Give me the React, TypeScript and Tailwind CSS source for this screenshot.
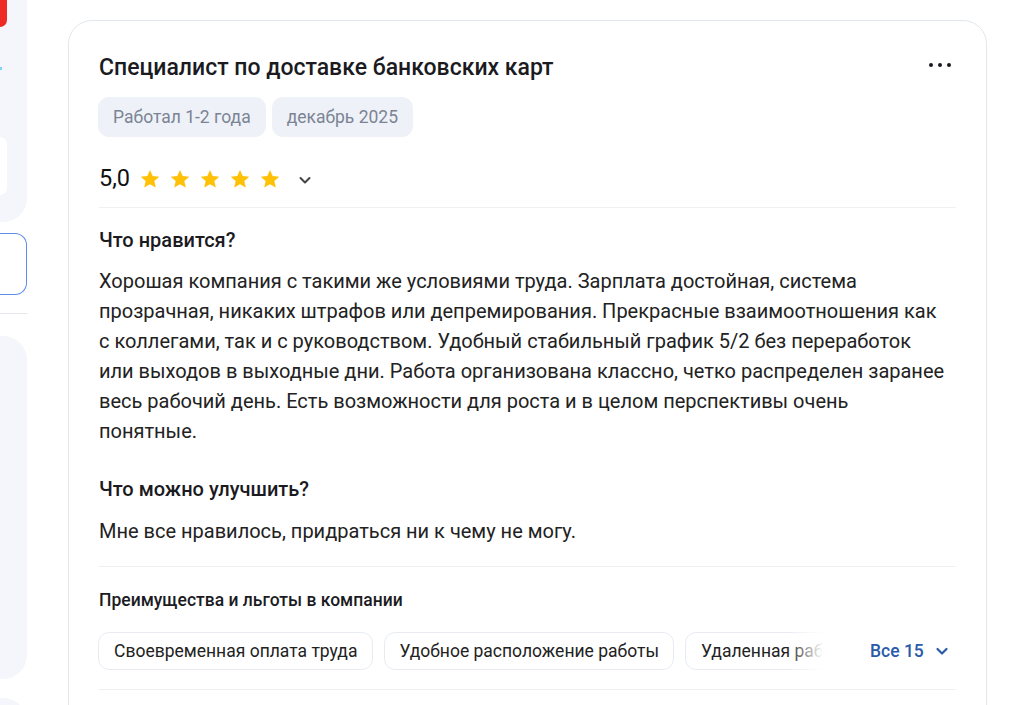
import React from "react";

function Star() {
  return (
    <svg width="22" height="22" viewBox="0 0 24 24" className="shrink-0">
      <path
        d="M12 2.2l2.95 6.6 7.2.7-5.43 4.8 1.6 7.07L12 17.7l-6.32 3.67 1.6-7.07L1.85 9.5l7.2-.7z"
        fill="#ffc107"
      />
    </svg>
  );
}

function Chevron({ color, size = 16, sw = 2 }: { color: string; size?: number; sw?: number }) {
  return (
    <svg width={size} height={size} viewBox="0 0 16 16" fill="none">
      <path d="M3.5 6l4.5 4.5L12.5 6" stroke={color} strokeWidth={sw} strokeLinecap="round" strokeLinejoin="round" />
    </svg>
  );
}

export default function App() {
  const font = { fontFamily: "Roboto, 'Noto Sans', Arial, sans-serif" };
  return (
    <div className="w-[1031px] h-[705px] overflow-hidden bg-white flex items-start" style={font}>
      {/* Sidebar (partially visible) */}
      <div className="w-[27px] shrink-0 flex flex-col">
        <div className="h-[222px] shrink-0 bg-[#f4f6fb] rounded-br-[24px] relative">
          <div className="absolute left-0 top-0 w-[7px] h-[27px] bg-[#ee2a24] rounded-br-[8px]" />
          <div className="absolute left-0 top-[67px] w-[2px] h-[3px] bg-[#7fd3f7]" />
          <div className="absolute left-0 top-[137px] w-[7px] h-[58px] bg-white rounded-r-[8px]" />
        </div>
        <div className="mt-[11px] h-[62px] shrink-0 border border-l-0 border-[#5b8def] rounded-r-[12px] bg-white" />
        <div className="mt-[18px] h-px shrink-0 bg-[#e3e6eb]" />
        <div className="mt-[22px] h-[343px] shrink-0 bg-[#f4f6fb] rounded-r-[24px]" />
        <div className="mt-[19px] h-[40px] shrink-0 bg-[#f4f6fb] rounded-tr-[24px]" />
      </div>

      {/* Card */}
      <div className="ml-[41px] mt-[20px] w-[919px] shrink-0 border border-[#e2e7ee] rounded-[24px] px-[30px] pt-[33px] h-[720px]">
        <div className="flex items-center justify-between">
          <h2 className="text-[23px] leading-[28px] font-medium text-[#1b1b1f]">
            Специалист по доставке банковских карт
          </h2>
          <div className="flex items-center gap-[5px] mr-[5px] -mt-[6px]">
            <span className="w-[4px] h-[4px] rounded-full bg-[#1b1b1f]" />
            <span className="w-[4px] h-[4px] rounded-full bg-[#1b1b1f]" />
            <span className="w-[4px] h-[4px] rounded-full bg-[#1b1b1f]" />
          </div>
        </div>

        <div className="mt-[15px] flex gap-[6px] -ml-px">
          <span className="h-[40px] px-[15px] flex items-center rounded-[11px] bg-[#eef1f7] text-[17.5px] text-[#7b8494]">
            Работал 1-2 года
          </span>
          <span className="h-[40px] px-[15px] flex items-center rounded-[11px] bg-[#eef1f7] text-[17.5px] text-[#7b8494]">
            декабрь 2025
          </span>
        </div>

        <div className="mt-[26px] h-[32px] flex items-center">
          <span className="text-[23.5px] text-[#111] mr-[9px]">5,0</span>
          <div className="flex items-center gap-[8px]">
            <Star />
            <Star />
            <Star />
            <Star />
            <Star />
          </div>
          <span className="ml-[16px] mt-[2px]">
            <Chevron color="#444" size={16} sw={2} />
          </span>
        </div>

        <div className="mt-[12px] h-px bg-[#eef0f3]" />

        <h3 className="mt-[19px] text-[20px] leading-[26px] font-medium text-[#1b1b1f]">Что нравится?</h3>
        <p className="mt-[13px] text-[20px] leading-[30px] text-[#222] whitespace-nowrap">
          Хорошая компания с такими же условиями труда. Зарплата достойная, система
          <br />
          прозрачная, никаких штрафов или депремирования. Прекрасные взаимоотношения как
          <br />
          с коллегами, так и с руководством. Удобный стабильный график 5/2 без переработок
          <br />
          или выходов в выходные дни. Работа организована классно, четко распределен заранее
          <br />
          весь рабочий день. Есть возможности для роста и в целом перспективы очень
          <br />
          понятные.
        </p>

        <h3 className="mt-[30px] text-[20px] leading-[26px] font-medium text-[#1b1b1f]">Что можно улучшить?</h3>
        <p className="mt-[14px] text-[20px] leading-[30px] text-[#222]">
          Мне все нравилось, придраться ни к чему не могу.
        </p>

        <div className="mt-[20px] h-px bg-[#eef0f3]" />

        <h4 className="mt-[21px] text-[17.5px] leading-[24px] font-medium text-[#1b1b1f]">
          Преимущества и льготы в компании
        </h4>

        <div className="mt-[20px] flex items-center -ml-px">
          <div className="relative w-[725px] shrink-0 overflow-hidden">
            <div className="flex gap-[11px] whitespace-nowrap">
              <span className="h-[38px] shrink-0 px-[15px] flex items-center rounded-[11px] border border-[#e8ecf2] text-[17.5px] text-[#222]">
                Своевременная оплата труда
              </span>
              <span className="h-[38px] shrink-0 px-[14px] flex items-center rounded-[11px] border border-[#e8ecf2] text-[17.5px] text-[#222]">
                Удобное расположение работы
              </span>
              <span className="h-[38px] shrink-0 px-[15px] flex items-center rounded-[11px] border border-[#e8ecf2] text-[17.5px] text-[#222]">
                Удаленная работа
              </span>
            </div>
            <div className="absolute right-0 top-0 h-full w-[36px] bg-gradient-to-r from-transparent to-white" />
          </div>
          <button className="ml-[47px] flex items-center gap-[10px] text-[17.5px] font-medium text-[#2b5ba8]">
            Все 15
            <Chevron color="#2b5ba8" size={16} sw={2.2} />
          </button>
        </div>

        <div className="mt-[19px] h-px bg-[#eef0f3]" />
      </div>
    </div>
  );
}
